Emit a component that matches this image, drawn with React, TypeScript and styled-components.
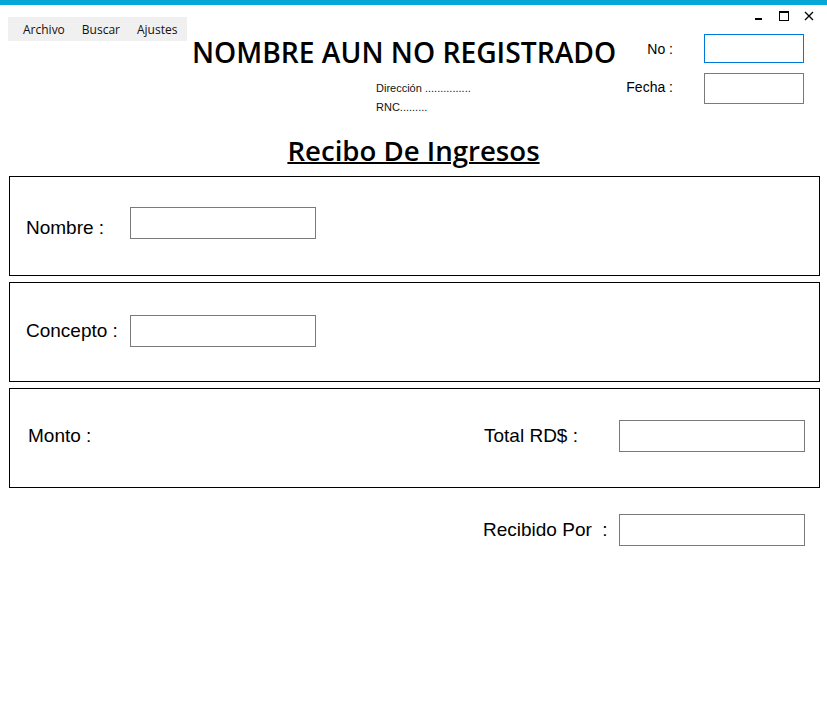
import styled, { createGlobalStyle } from "styled-components";

const GlobalStyle = createGlobalStyle`
  html, body {
    margin: 0;
    padding: 0;
    background: #ffffff;
  }
  body {
    font-family: "Liberation Sans", Arial, sans-serif;
    color: #000000;
  }
`;

const Window = styled.div`
  width: 827px;
  height: 709px;
  background: #ffffff;
  overflow: hidden;
`;

const TopBar = styled.div`
  height: 5px;
  background: #05a8d6;
`;

const Header = styled.div`
  height: 127px;
  display: flex;
  align-items: flex-start;
`;

const MenuBar = styled.div`
  width: 179px;
  height: 24px;
  margin: 12px 0 0 8px;
  padding-left: 15px;
  box-sizing: border-box;
  display: flex;
  align-items: center;
  gap: 17px;
  background: #f0f0f0;
  font-family: "Open Sans", "Noto Sans", sans-serif;
  font-size: 12px;
`;

const MenuItem = styled.span`
  color: #111;
`;

const TitleBlock = styled.div`
  margin: 30px 0 0 5px;
  display: flex;
  flex-direction: column;
`;

const CompanyName = styled.h1`
  margin: 0;
  font-family: "Open Sans", "Noto Sans", sans-serif;
  font-weight: 600;
  font-size: 28.2px;
  line-height: 34px;
  white-space: nowrap;
`;

const AddressLines = styled.div`
  margin: 10px 0 0 184px;
  font-size: 11px;
  line-height: 19px;
  color: #111;
`;

const RightBlock = styled.div`
  margin-left: auto;
  display: flex;
  flex-direction: column;
  align-items: flex-end;
`;

const Controls = styled.div`
  margin-top: 6px;
  padding-right: 13px;
  display: flex;
  gap: 15px;
`;

const TopFields = styled.div`
  margin-top: 13px;
  padding-right: 23px;
  display: flex;
  flex-direction: column;
  gap: 10px;
`;

const TopRow = styled.div<{ $lift?: number }>`
  display: flex;
  align-items: center;
  justify-content: flex-end;
  gap: 31px;

  & > span {
    font-size: 14px;
    margin-top: ${({ $lift }) => -($lift ?? 0)}px;
  }
`;

const TextBox = styled.input<{ $w: number; $h: number; $active?: boolean }>`
  width: ${({ $w }) => $w}px;
  height: ${({ $h }) => $h}px;
  box-sizing: border-box;
  margin: 0;
  padding: 0 4px;
  border: 1px solid ${({ $active }) => ($active ? "#0078d7" : "#7a7a7a")};
  background: #ffffff;
  outline: none;
  font-family: inherit;
`;

const Heading = styled.h2`
  margin: 0;
  text-align: center;
  font-family: "Open Sans", "Noto Sans", sans-serif;
  font-weight: 600;
  font-size: 27.6px;
  line-height: 36px;
  text-decoration: underline;
  text-decoration-thickness: 2px;
`;

const Form = styled.div`
  margin-top: 8px;
  padding: 0 7px 0 9px;
  display: flex;
  flex-direction: column;
  gap: 6px;
`;

const Section = styled.div<{ $lift: number }>`
  height: 100px;
  box-sizing: border-box;
  border: 1px solid #000000;
  padding: 0 14px ${({ $lift }) => $lift}px 16px;
  display: flex;
  align-items: center;
  justify-content: space-between;
`;

const Field = styled.div<{ $labelWidth: number; $drop?: number }>`
  display: flex;
  align-items: center;

  & > label {
    width: ${({ $labelWidth }) => $labelWidth}px;
    font-size: 19px;
    line-height: 22px;
    white-space: pre;
    margin-top: ${({ $drop }) => ($drop ?? 0) * 2}px;
  }
`;

const FooterRow = styled.div`
  margin-top: 26px;
  padding-right: 22px;
  display: flex;
  justify-content: flex-end;
`;

function Minimize() {
  return (
    <svg width="10" height="10" viewBox="0 0 10 10">
      <rect x="1" y="7" width="7" height="2" fill="#000" />
    </svg>
  );
}

function Maximize() {
  return (
    <svg width="10" height="10" viewBox="0 0 10 10">
      <rect x="0.5" y="0.5" width="9" height="9" fill="none" stroke="#000" />
      <rect x="0" y="0" width="10" height="2" fill="#000" />
    </svg>
  );
}

function Close() {
  return (
    <svg width="10" height="10" viewBox="0 0 10 10">
      <path d="M1 1 L9 9 M9 1 L1 9" stroke="#000" strokeWidth="1.3" />
    </svg>
  );
}

export default function App() {
  return (
    <Window>
      <GlobalStyle />
      <TopBar />
      <Header>
        <MenuBar>
          <MenuItem>Archivo</MenuItem>
          <MenuItem>Buscar</MenuItem>
          <MenuItem>Ajustes</MenuItem>
        </MenuBar>
        <TitleBlock>
          <CompanyName>NOMBRE AUN NO REGISTRADO</CompanyName>
          <AddressLines>
            <div>Dirección ...............</div>
            <div>RNC.........</div>
          </AddressLines>
        </TitleBlock>
        <RightBlock>
          <Controls>
            <Minimize />
            <Maximize />
            <Close />
          </Controls>
          <TopFields>
            <TopRow>
              <span>No :</span>
              <TextBox $w={100} $h={29} $active />
            </TopRow>
            <TopRow $lift={3}>
              <span>Fecha :</span>
              <TextBox $w={100} $h={31} />
            </TopRow>
          </TopFields>
        </RightBlock>
      </Header>

      <Heading>Recibo De Ingresos</Heading>

      <Form>
        <Section $lift={6}>
          <Field $labelWidth={104} $drop={5}>
            <label>Nombre :</label>
            <TextBox $w={186} $h={32} />
          </Field>
        </Section>
        <Section $lift={2}>
          <Field $labelWidth={104}>
            <label>Concepto :</label>
            <TextBox $w={186} $h={32} />
          </Field>
        </Section>
        <Section $lift={4}>
          <Field $labelWidth={0}>
            <label style={{ paddingLeft: 2 }}>Monto :</label>
          </Field>
          <Field $labelWidth={135}>
            <label>Total RD$ :</label>
            <TextBox $w={186} $h={32} />
          </Field>
        </Section>
      </Form>

      <FooterRow>
        <Field $labelWidth={136}>
          <label>Recibido Por  :</label>
          <TextBox $w={186} $h={32} />
        </Field>
      </FooterRow>
    </Window>
  );
}
